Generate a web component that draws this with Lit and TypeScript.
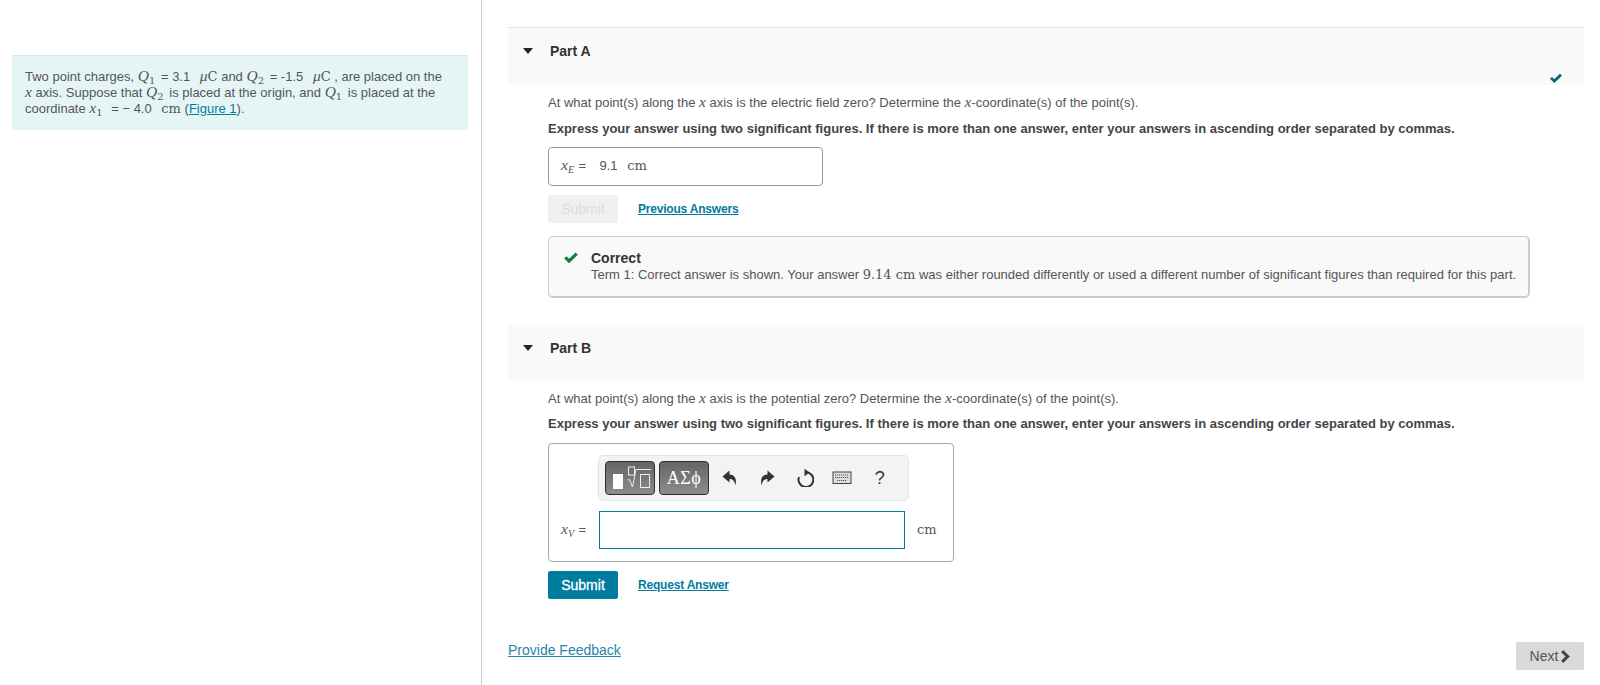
import { LitElement, html, css } from "lit";
import { customElement } from "lit/decorators.js";

const check = (cls: string) => html`<svg class=${cls} viewBox="0 0 16 12"><path d="M1.2 6.4 3.4 4.2 6 6.8 12.6.6 14.8 2.8 6 11.2Z" fill="currentColor"/></svg>`;

@customElement("app-root")
export class AppRoot extends LitElement {
  static styles = css`
    :host { display: block; width: 1600px; height: 685px; overflow: hidden; background: #fff; font: 13px/16px "Liberation Sans", Arial, sans-serif; color: #555; }
    * { box-sizing: border-box; }
    .page { display: flex; height: 685px; }
    .left { width: 482px; flex: none; border-right: 1px solid #c7cbe0; padding: 55px 13px 0 12px; }
    .intro { height: 75px; background: #e5f5f6; border-top: 1px solid #d8e4e4; padding: 13px 13px; white-space: nowrap; }
    .right { flex: 1; padding: 27px 16px 0 26px; display: flex; flex-direction: column; position: relative; }
    .m { font-family: "DejaVu Serif", "Liberation Serif", serif; font-size: 13px; line-height: 0; color: #555; }
    .i { font-family: "Liberation Serif", serif; font-style: italic; font-size: 15.5px; line-height: 0; color: #555; }
    .gap { display: inline-block; width: 6px; }
    .gap.s { width: 3px; }
    sub { font-size: 10px; line-height: 0; vertical-align: -3px; font-family: "DejaVu Serif", serif; margin-right: 2px; }
    sub.si { font-family: "Liberation Serif", serif; font-style: italic; margin-right: 1px; }
    a { color: #007c9f; text-decoration: underline; }
    .head { height: 58px; background: #f9f9f9; padding: 15px 0 0 15px; display: flex; color: #333; font-weight: bold; font-size: 14px; position: relative; }
    .head.a { border-top: 1px solid #e2e2e2; }
    .head.b { height: 56px; margin-top: 27px; padding-top: 15px; }
    .tri { width: 0; height: 0; margin: 5px 17px 0 0; border: 5.5px solid transparent; border-top: 6px solid #222; border-bottom: 0; }
    .tick { position: absolute; right: 21px; bottom: 1px; width: 14px; height: 11px; color: #0b5f78; }
    .body { padding-left: 40px; }
    .q { margin-top: 10px; height: 16px; white-space: nowrap; }
    .ex { margin-top: 10px; height: 16px; font-weight: bold; color: #444; white-space: nowrap; }
    .ex.exb { margin-top: 9px; }
    .ans { margin-top: 10px; width: 275px; height: 39px; border: 1px solid #999; border-radius: 4px; padding: 10px 12px; color: #555; white-space: pre; }
    .actions { display: flex; align-items: center; gap: 20px; margin-top: 9px; height: 28px; font-weight: bold; font-size: 12px; letter-spacing: -.2px; }
    .btn { width: 70px; height: 28px; border-radius: 2px; display: flex; align-items: center; justify-content: center; font-size: 14px; font-weight: normal; letter-spacing: 0; }
    .btn.off { background: #f0f0f0; color: #dcdcdc; }
    .btn.on { background: #007c9f; color: #fff; -webkit-text-stroke: .3px #fff; }
    .correct { margin-top: 13px; width: 982px; height: 62px; border: 1px solid #ccc; border-bottom-width: 2px; border-right-width: 2px; border-radius: 5px; background: #f9f9f9; padding: 13px 0 0 14px; display: flex; gap: 12px; }
    .correct svg { width: 16px; height: 12px; color: #0a8043; margin-top: 2px; flex: none; }
    .correct b { display: block; color: #333; height: 17px; font-size: 14px; }
    .correct span.t { white-space: nowrap; }
    .box { margin-top: 11px; width: 406px; height: 119px; border: 1px solid #aaa; border-radius: 4px; padding: 11px 0 0 49px; }
    .tools { width: 311px; height: 46px; background: #f3f3f3; border: 1px solid #e3e3e3; border-radius: 5px; padding: 5px 6px; display: flex; align-items: center; gap: 4px; }
    .tb { width: 50px; height: 34px; flex: none; border: 1px solid #2f2f2f; border-radius: 4px; background: linear-gradient(#656567, #8c8c8e); color: #fff; display: flex; align-items: center; justify-content: center; font: 18px "Liberation Serif", serif; letter-spacing: .5px; }
    .tb svg { width: 48px; height: 32px; }
    .ic { width: 33.5px; height: 34px; flex: none; display: flex; align-items: center; justify-content: center; color: #333; font-size: 18px; }
    .ic svg { width: 18px; height: 18px; }
    .row { display: flex; align-items: center; margin: 10px 0 0 -37px; height: 38px; }
    .row .lab { width: 38px; color: #555; white-space: pre; }
    .field { width: 306px; height: 38px; border: 1px solid #007c9f; }
    .row > .m { margin-left: 12px; }
    .fb { position: absolute; left: 26px; top: 642px; font-size: 14px; line-height: 16px; color: #1e87a6; }
    .next { position: absolute; right: 16px; top: 642px; width: 68px; height: 28px; background: #d9d9d9; border-radius: 2px; display: flex; align-items: center; justify-content: center; gap: 3px; font-size: 14px; color: #555; }
    .next svg { width: 9px; height: 13px; }
  `;

  render() {
    return html`<div class="page">
      <div class="left"><div class="intro">
        Two point charges, <span class="i">Q</span><sub>1</sub> = 3.1 <span class="gap"></span><span class="m"><span class="i">μ</span>C</span> and <span class="i">Q</span><sub>2</sub> = -1.5 <span class="gap"></span><span class="m"><span class="i">μ</span>C</span> , are placed on the<br>
        <span class="i">x</span> axis. Suppose that <span class="i">Q</span><sub>2</sub> is placed at the origin, and <span class="i">Q</span><sub>1</sub> is placed at the<br>
        coordinate <span class="i">x</span><sub>1</sub> <span class="gap s"></span>= − 4.0 <span class="gap"></span><span class="m">cm</span> (<a>Figure 1</a>).
      </div></div>
      <div class="right">
        <div class="head a"><span class="tri"></span>Part A${check("tick")}</div>
        <div class="body">
          <div class="q">At what point(s) along the <span class="i">x</span> axis is the electric field zero? Determine the <span class="i">x</span>-coordinate(s) of the point(s).</div>
          <div class="ex">Express your answer using two significant figures. If there is more than one answer, enter your answers in ascending order separated by commas.</div>
          <div class="ans"><span class="i">x</span><sub class="si">E</sub> =  <span class="gap"></span>9.1 <span class="gap"></span><span class="m">cm</span></div>
          <div class="actions"><span class="btn off">Submit</span><a>Previous Answers</a></div>
          <div class="correct">${check("")}<div><b>Correct</b><span class="t">Term 1: Correct answer is shown. Your answer <span class="m">9.14 cm</span> was either rounded differently or used a different number of significant figures than required for this part.</span></div></div>
        </div>
        <div class="head b"><span class="tri"></span>Part B</div>
        <div class="body">
          <div class="q">At what point(s) along the <span class="i">x</span> axis is the potential zero? Determine the <span class="i">x</span>-coordinate(s) of the point(s).</div>
          <div class="ex exb">Express your answer using two significant figures. If there is more than one answer, enter your answers in ascending order separated by commas.</div>
          <div class="box">
            <div class="tools">
              <span class="tb"><svg viewBox="0 0 48 32"><rect x="7" y="12" width="10" height="15" fill="#fff"/><rect x="22.500" y="5" width="6" height="8" fill="none" stroke="#eee"/><path d="M21.500 18l2-.5 3 7.500 3.500-17.500h15" fill="none" stroke="#eee"/><rect x="34.500" y="12.500" width="9" height="13" fill="none" stroke="#eee"/></svg></span>
              <span class="tb">ΑΣϕ</span>
              <span class="ic"><svg viewBox="0 0 18 18"><path d="M8.500 1.500 1.500 7.500l7 6V10c3 0 5 1.500 6 6.500 1.500-7-1-11-6-11Z" fill="currentColor"/></svg></span>
              <span class="ic"><svg viewBox="0 0 18 18"><path d="M9.500 1.500l7 6-7 6V10c-3 0-5 1.500-6 6.500-1.500-7 1-11 6-11Z" fill="currentColor"/></svg></span>
              <span class="ic"><svg viewBox="0 0 18 18"><path d="M10 3.200a7.400 7.400 0 1 1-7 4.800" fill="none" stroke="currentColor" stroke-width="2"/><path d="M8.500-.3v7.500l5-3.700Z" fill="currentColor"/></svg></span>
              <span class="ic"><svg viewBox="0 0 20 18" style="width:20px"><rect x="1" y="3" width="18" height="11.500" fill="#ddd" stroke="#444"/><path d="M3 6h14M3 8.500h14M5 11.500h10" stroke="#555" stroke-dasharray="1.200 .8"/></svg></span>
              <span class="ic">?</span>
            </div>
            <div class="row"><span class="lab"><span class="i">x</span><sub class="si">V</sub> =</span><div class="field"></div><span class="m">cm</span></div>
          </div>
          <div class="actions"><span class="btn on">Submit</span><a>Request Answer</a></div>
        </div>
        <a class="fb">Provide Feedback</a>
        <span class="next">Next <svg viewBox="0 0 8 12"><path d="M1.800 0 8 6l-6.200 6L0 10 4 6 0 2Z" fill="#444"/></svg></span>
      </div>
    </div>`;
  }
}
